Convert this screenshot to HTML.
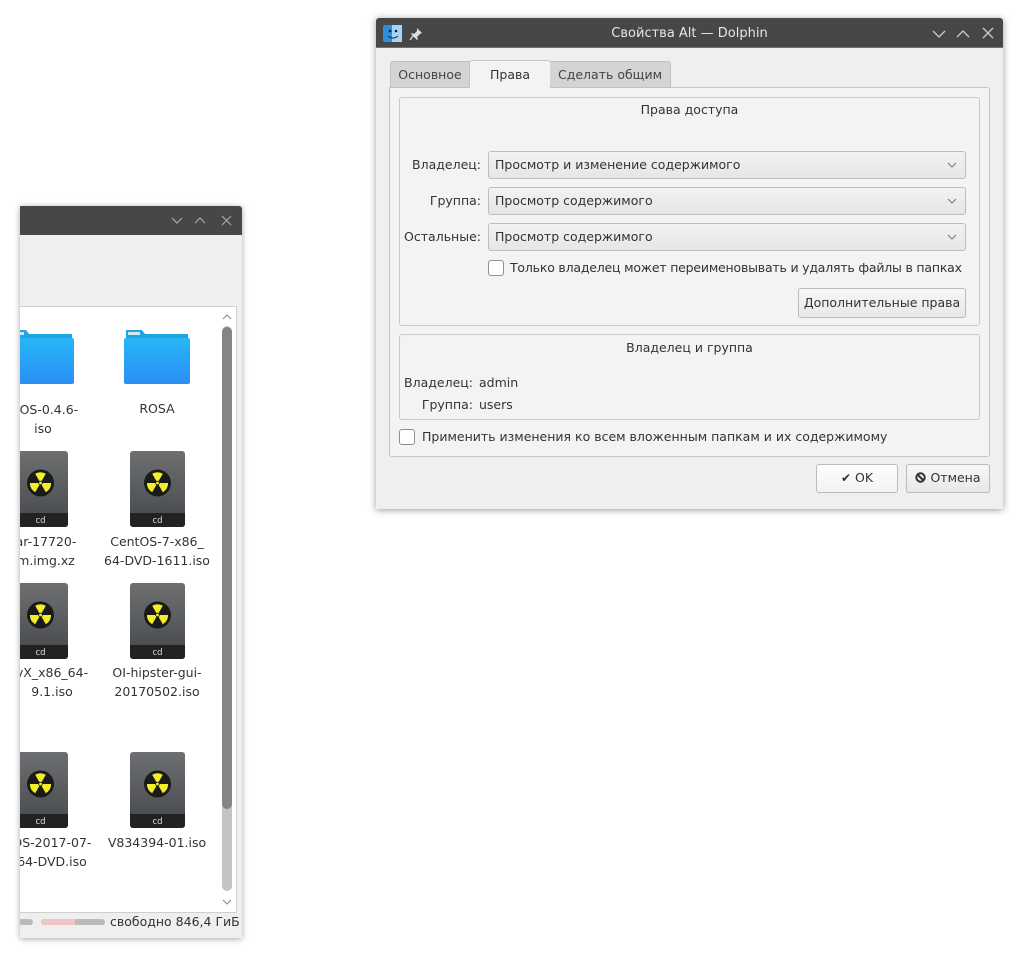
<!DOCTYPE html>
<html><head><meta charset="utf-8"><style>
*{box-sizing:border-box;margin:0;padding:0}
body{width:1023px;height:957px;background:#fff;position:relative;overflow:hidden;font-family:"DejaVu Sans","Liberation Sans",sans-serif;font-size:12.5px;color:#333}
.a{position:absolute}
.t{position:absolute;white-space:nowrap}
.combo{position:absolute;left:488px;width:478px;height:28px;border:1px solid #bdbdbd;border-radius:3px;background:linear-gradient(#f2f2f2,#e6e6e6);padding:6px 6px;line-height:14px}
.combo svg{position:absolute;right:8px;top:10px}
.lbl{position:absolute;right:542px;line-height:14px;text-align:right}
.cb{position:absolute;width:16px;height:16px;border:1px solid #8f8f8f;border-radius:3px;background:#fff}
.btn{position:absolute;border:1px solid #bbb;border-radius:3px;background:linear-gradient(#f7f7f7,#e8e8e8);text-align:center;line-height:26px}
.fn{position:absolute;width:110px;text-align:center;font-size:12.5px;line-height:19px;color:#333}
</style></head><body>
<svg width="0" height="0" style="position:absolute"><defs>
<linearGradient id="cdg" x1="0" y1="0" x2="0" y2="1"><stop offset="0" stop-color="#6d6f71"/><stop offset="1" stop-color="#45484b"/></linearGradient>
<linearGradient id="fg" x1="0" y1="0" x2="0" y2="1"><stop offset="0" stop-color="#25b7f7"/><stop offset="1" stop-color="#2a8ef5"/></linearGradient>
<symbol id="cd" viewBox="0 0 55 76">
<rect x="0" y="0" width="55" height="76" rx="3" fill="url(#cdg)"/>
<path d="M0 62H55V73a3 3 0 0 1-3 3H3a3 3 0 0 1-3-3z" fill="#222"/>
<text x="27.5" y="72" font-family="DejaVu Sans" font-size="8.5" fill="#ddd" text-anchor="middle">cd</text>
<circle cx="27.5" cy="32" r="13.5" fill="#1a1a1a"/>
<g fill="#f2ef2a">
<path d="M27.5 32 L22.2 22.8 A10.6 10.6 0 0 1 32.8 22.8Z"/>
<path d="M27.5 32 L38.1 32 A10.6 10.6 0 0 1 32.8 41.2Z"/>
<path d="M27.5 32 L22.2 41.2 A10.6 10.6 0 0 1 16.9 32Z"/>
</g>
<circle cx="27.5" cy="32" r="2.2" fill="#1a1a1a"/><circle cx="27.5" cy="32" r="1.4" fill="#f2ef2a"/>
</symbol>
<symbol id="fold" viewBox="0 0 66 54">
<path d="M2 0h16l3 4h43v6H2z" fill="#1fa5e6"/>
<rect x="4" y="2" width="12" height="3" fill="#cfe9f7"/>
<rect x="0" y="8" width="66" height="46" rx="2" fill="url(#fg)"/>
</symbol>
</defs></svg>

<!-- left window -->
<div class="a" style="left:20px;top:206px;width:222px;height:732px;background:#efefef;box-shadow:0 1px 6px rgba(0,0,0,.35)"></div>
<div class="a" style="left:20px;top:206px;width:222px;height:29px;background:#474747;border-radius:0 3px 0 0"></div>
<svg class="a" style="left:170px;top:214px" width="64" height="14" fill="none" stroke="#aaa" stroke-width="1.2"><path d="M2 4l5 5 5-5"/><path d="M25 9l5-5 5 5"/><path d="M52 2l9 9M61 2l-9 9"/></svg>
<div class="a" style="left:20px;top:306px;width:217px;height:607px;background:#fff;border:1px solid #cfcfcf;border-left:none"></div>
<svg class="a" style="left:221px;top:312px" width="12" height="10" fill="none" stroke="#888"><path d="M2 7l4-4 4 4"/></svg>
<svg class="a" style="left:221px;top:897px" width="12" height="10" fill="none" stroke="#888"><path d="M2 3l4 4 4-4"/></svg>
<div class="a" style="left:222px;top:326px;width:10px;height:565px;background:#c4c4c4;border-radius:5px"></div>
<div class="a" style="left:222px;top:327px;width:10px;height:482px;background:#858585;border-radius:5px"></div>

<div class="a" style="left:20px;top:307px;width:200px;height:600px;overflow:hidden">
<div class="a" style="left:-20px;top:-307px;width:240px;height:960px">
<svg class="a" style="left:8px;top:330px" width="66" height="54"><use href="#fold"/></svg>
<svg class="a" style="left:124px;top:330px" width="66" height="54"><use href="#fold"/></svg>
<div class="fn" style="left:-12px;top:400px">ctOS-0.4.6-<br>iso</div>
<div class="fn" style="left:102px;top:399px">ROSA</div>

<svg class="a" style="left:13px;top:451px" width="55" height="76"><use href="#cd"/></svg>
<svg class="a" style="left:130px;top:451px" width="55" height="76"><use href="#cd"/></svg>
<div class="fn" style="left:-9px;top:532px">ar-17720-<br>m.img.xz</div>
<div class="fn" style="left:102px;top:532px">CentOS-7-x86_<br>64-DVD-1611.iso</div>

<svg class="a" style="left:13px;top:583px" width="55" height="76"><use href="#cd"/></svg>
<svg class="a" style="left:130px;top:583px" width="55" height="76"><use href="#cd"/></svg>
<div class="fn" style="left:-3px;top:663px">vX_x86_64-<br>9.1.iso</div>
<div class="fn" style="left:102px;top:663px">OI-hipster-gui-<br>20170502.iso</div>

<svg class="a" style="left:13px;top:752px" width="55" height="76"><use href="#cd"/></svg>
<svg class="a" style="left:130px;top:752px" width="55" height="76"><use href="#cd"/></svg>
<div class="fn" style="left:-3px;top:833px">DS-2017-07-<br>64-DVD.iso</div>
<div class="fn" style="left:102px;top:833px">V834394-01.iso</div>
</div></div>

<div class="a" style="left:20px;top:919px;width:13px;height:6px;background:#bbb;border-radius:0 3px 3px 0"></div>
<div class="a" style="left:41px;top:919px;width:64px;height:6px;background:#bbb;border-radius:3px"></div>
<div class="a" style="left:41px;top:919px;width:34px;height:6px;background:#f1c4c4;border-radius:3px 0 0 3px"></div>
<div class="t" style="left:110px;top:914px;line-height:16px;font-size:12.5px">свободно 846,4 ГиБ</div>

<!-- dialog -->
<div class="a" style="left:376px;top:18px;width:627px;height:491px;background:#efefef;box-shadow:0 1px 7px rgba(0,0,0,.4)"></div>
<div class="a" style="left:376px;top:18px;width:627px;height:30px;background:#474747;border-radius:3px 3px 0 0;border-bottom:1px solid #e0443e"></div>
<svg class="a" style="left:383px;top:25px" width="19" height="17"><rect width="19" height="17" rx="2" fill="#2b8fe0"/><rect x="9" width="10" height="17" fill="#a9d3f5"/><circle cx="7" cy="6" r="1.3" fill="#123"/><circle cx="13" cy="6" r="1.3" fill="#123"/><path d="M5 11q5 4 10 0" stroke="#123" fill="none"/></svg>
<svg class="a" style="left:409px;top:27px" width="14" height="14" fill="#ddd"><path d="M8 1l5 5-2 1-3 3 1 2-1 1-6-6 1-1 2 1 3-3z"/><path d="M4 9l-3 4" stroke="#ddd" stroke-width="1.4"/></svg>
<div class="t" style="left:376px;width:627px;top:25px;text-align:center;color:#e6e6e6;font-size:13px;line-height:17px">Свойства Alt — Dolphin</div>
<svg class="a" style="left:932px;top:27px" width="64" height="14" fill="none" stroke="#ccc" stroke-width="1.3"><path d="M1 4l6 6 6-6"/><path d="M25 10l6-6 6 6"/><path d="M51 1l10 10M61 1l-10 10"/></svg>

<!-- tabs -->
<div class="a" style="left:389px;top:87px;width:601px;height:370px;background:#f3f3f3;border:1px solid #c6c6c6;border-radius:0 3px 3px 3px"></div>
<div class="a" style="left:390px;top:61px;width:80px;height:27px;background:#d4d4d4;border:1px solid #c2c2c2;border-radius:3px 0 0 0;text-align:center;line-height:25px;color:#444">Основное</div>
<div class="a" style="left:469px;top:60px;width:82px;height:28px;background:#f3f3f3;border:1px solid #c6c6c6;border-bottom:none;border-radius:3px 3px 0 0;text-align:center;line-height:28px;color:#333">Права</div>
<div class="a" style="left:550px;top:61px;width:121px;height:27px;background:#d4d4d4;border:1px solid #c2c2c2;border-left:none;border-radius:0 3px 0 0;text-align:center;line-height:25px;color:#444">Сделать общим</div>

<!-- group 1 -->
<div class="a" style="left:399px;top:97px;width:581px;height:229px;border:1px solid #c8c8c8;border-radius:3px;background:#f3f3f3"></div>
<div class="t" style="left:399px;width:581px;top:103px;text-align:center;line-height:14px">Права доступа</div>
<div class="lbl" style="top:158px">Владелец:</div>
<div class="lbl" style="top:194px">Группа:</div>
<div class="lbl" style="top:230px">Остальные:</div>
<div class="combo" style="top:151px">Просмотр и изменение содержимого<svg width="10" height="7" fill="none" stroke="#777"><path d="M1 1l4 4 4-4"/></svg></div>
<div class="combo" style="top:187px">Просмотр содержимого<svg width="10" height="7" fill="none" stroke="#777"><path d="M1 1l4 4 4-4"/></svg></div>
<div class="combo" style="top:223px">Просмотр содержимого<svg width="10" height="7" fill="none" stroke="#777"><path d="M1 1l4 4 4-4"/></svg></div>
<div class="cb" style="left:488px;top:260px"></div>
<div class="t" style="left:510px;top:261px;line-height:14px;letter-spacing:-0.2px">Только владелец может переименовывать и удалять файлы в папках</div>
<div class="btn" style="left:798px;top:288px;width:168px;height:30px;line-height:28px">Дополнительные права</div>

<!-- group 2 -->
<div class="a" style="left:399px;top:334px;width:581px;height:86px;border:1px solid #c8c8c8;border-radius:3px;background:#f3f3f3"></div>
<div class="t" style="left:399px;width:581px;top:341px;text-align:center;line-height:14px">Владелец и группа</div>
<div class="lbl" style="top:376px;right:550px">Владелец:</div>
<div class="t" style="left:479px;top:376px;line-height:14px">admin</div>
<div class="lbl" style="top:398px;right:550px">Группа:</div>
<div class="t" style="left:479px;top:398px;line-height:14px">users</div>

<div class="cb" style="left:399px;top:429px"></div>
<div class="t" style="left:422px;top:430px;line-height:14px">Применить изменения ко всем вложенным папкам и их содержимому</div>

<div class="btn" style="left:816px;top:464px;width:82px;height:29px;background:linear-gradient(#fdfdfd,#f3f3f3)"><span style="font-size:12px">✔</span> OK</div>
<div class="btn" style="left:906px;top:464px;width:84px;height:29px"><svg width="11" height="11" style="vertical-align:-1px"><circle cx="5.5" cy="5.5" r="4.2" fill="none" stroke="#333" stroke-width="2"/><path d="M2.5 2.5l6 6" stroke="#333" stroke-width="2"/></svg> Отмена</div>
</body></html>
